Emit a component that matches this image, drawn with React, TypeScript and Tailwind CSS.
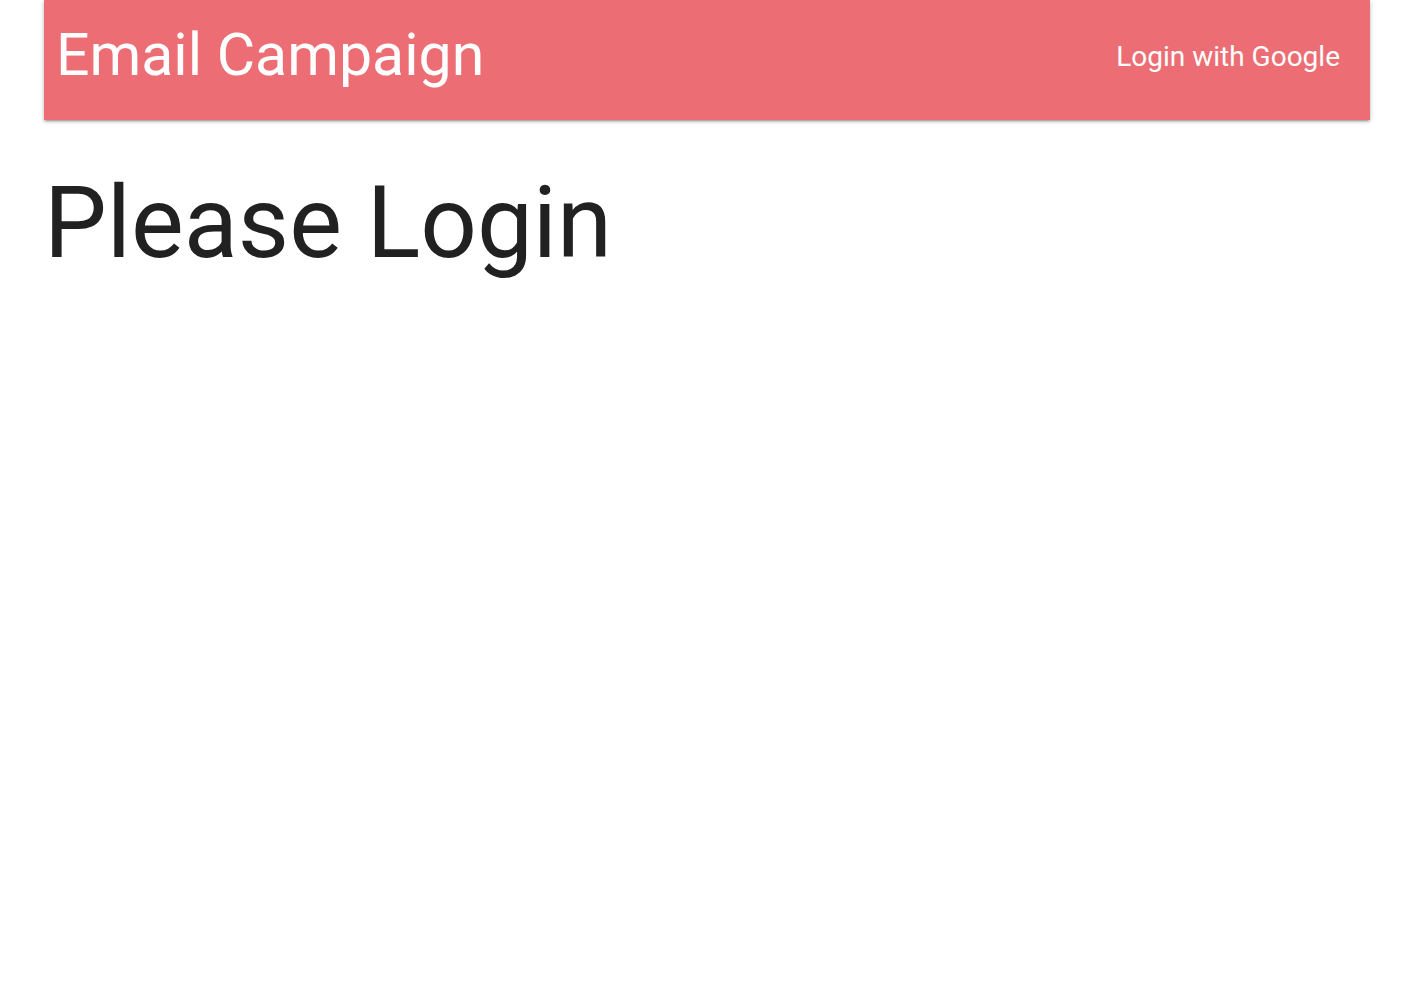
export default function App() {
  return (
    <div className="min-h-screen bg-white" style={{ fontFamily: "Roboto, sans-serif" }}>
      <div className="ml-[44px] w-[1326px]">
        <nav className="flex h-[120px] items-start justify-between bg-[#ec6e74] pl-[12px] pr-[30px] text-white shadow-[0_2px_2px_0_rgba(0,0,0,0.14),0_3px_1px_-2px_rgba(0,0,0,0.12),0_1px_5px_0_rgba(0,0,0,0.2)]">
          <a className="mt-[25px] text-[59px] leading-none">Email Campaign</a>
          <a className="mt-[43px] text-[28px] leading-none">Login with Google</a>
        </nav>
        <h2 className="mt-[54px] text-[99.5px] leading-none text-[#212121]">Please Login</h2>
      </div>
    </div>
  );
}
